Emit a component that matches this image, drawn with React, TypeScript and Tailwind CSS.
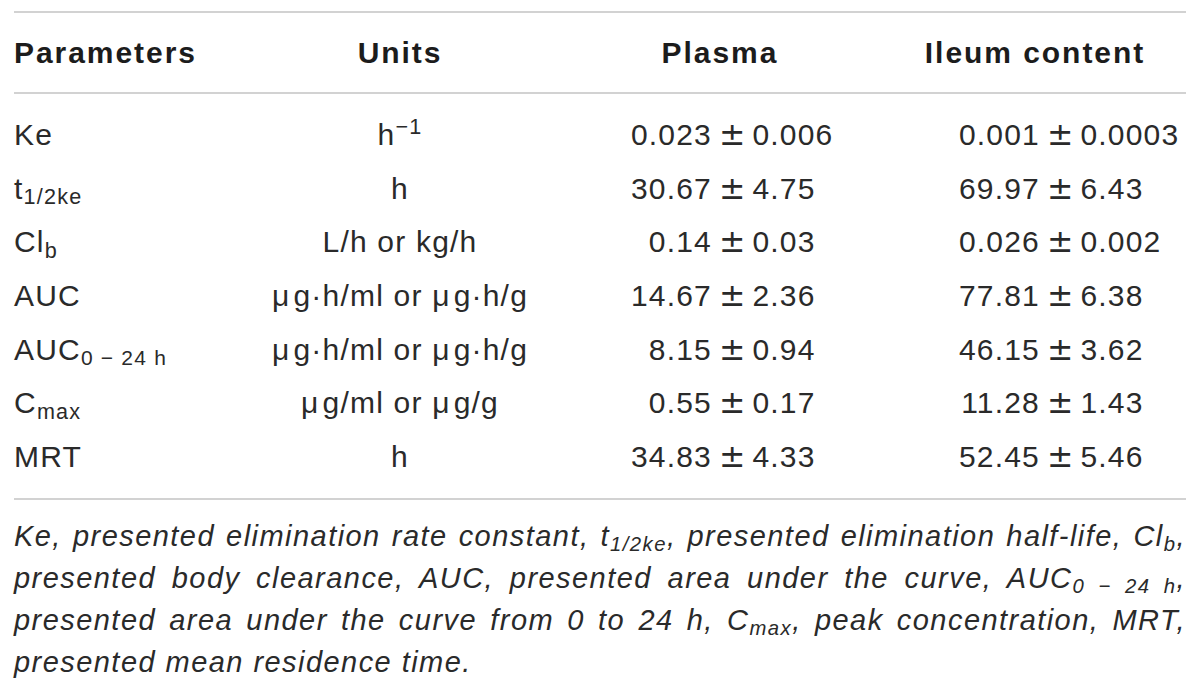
const rows = [
  { p: <>Ke</>, u: <>h<sup className="text-[0.72em]">−1</sup></>, pl: ["0.023", "0.006"], il: ["0.001", "0.0003"] },
  { p: <>t<sub className="text-[0.72em]">1/2ke</sub></>, u: <>h</>, pl: ["30.67", "4.75"], il: ["69.97", "6.43"] },
  { p: <>Cl<sub className="text-[0.72em]">b</sub></>, u: <>L/h or kg/h</>, pl: ["0.14", "0.03"], il: ["0.026", "0.002"] },
  { p: <>AUC</>, u: <><Mu />g·h/ml or <Mu />g·h/g</>, pl: ["14.67", "2.36"], il: ["77.81", "6.38"] },
  { p: <>AUC<sub className="text-[0.7em]">0 − 24 h</sub></>, u: <><Mu />g·h/ml or <Mu />g·h/g</>, pl: ["8.15", "0.94"], il: ["46.15", "3.62"] },
  { p: <>C<sub className="text-[0.72em]">max</sub></>, u: <><Mu />g/ml or <Mu />g/g</>, pl: ["0.55", "0.17"], il: ["11.28", "1.43"] },
  { p: <>MRT</>, u: <>h</>, pl: ["34.83", "4.33"], il: ["52.45", "5.46"] },
];

function Mu() {
  return <span className="mr-[3px]">μ</span>;
}

function Value({ v, lw }: { v: string[]; lw: string }) {
  return (
    <div className="flex items-baseline">
      <span className={`${lw} text-right`}>{v[0]}</span>
      <span className="mx-[7px] font-['DejaVu_Sans'] text-[1.05em] tracking-normal">±</span>
      <span>{v[1]}</span>
    </div>
  );
}

export default function App() {
  return (
    <div className="min-h-screen bg-white font-['Liberation_Sans',Arial,sans-serif] text-[#2a2a2a]">
      <div className="mx-auto w-[1172px] pt-[11px]">
        <div className="grid h-[83px] grid-cols-[236px_300px_340px_296px] items-center border-y-2 border-[#d2d2d2] text-[30px] font-bold tracking-[0.065em] text-[#1c1c1c]">
          <div>Parameters</div>
          <div className="text-center">Units</div>
          <div className="text-center">Plasma</div>
          <div className="pr-[6px] text-center">Ileum content</div>
        </div>

        <div className="border-b-2 border-[#d2d2d2] py-[14px] text-[30px] tracking-[0.04em]">
          {rows.map((r, i) => (
            <div key={i} className="grid h-[53.67px] grid-cols-[236px_300px_340px_296px] items-center leading-[53.67px]">
              <div>{r.p}</div>
              <div className="text-center">{r.u}</div>
              <Value v={r.pl} lw="w-[162px]" />
              <Value v={r.il} lw="w-[150px]" />
            </div>
          ))}
        </div>

        <p className="pt-[15px] text-justify text-[29px] italic leading-[42px] tracking-[0.05em]">
          Ke, presented elimination rate constant, t<sub className="text-[0.7em]">1/2ke</sub>, presented elimination
          half-life, Cl<sub className="text-[0.7em]">b</sub>, presented body clearance, AUC, presented area under the
          curve, AUC<sub className="text-[0.7em]">0 − 24 h</sub>, presented area under the curve from 0 to 24 h, C
          <sub className="text-[0.7em]">max</sub>, peak concentration, MRT, presented mean residence time.
        </p>
      </div>
    </div>
  );
}
